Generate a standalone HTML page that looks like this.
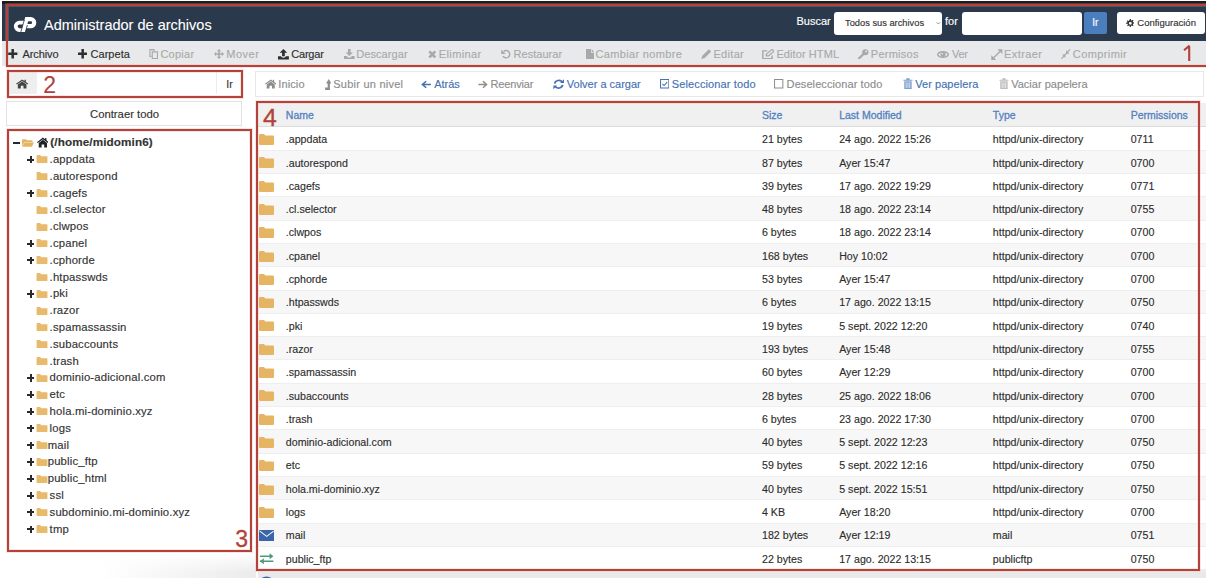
<!DOCTYPE html>
<html><head><meta charset="utf-8"><title>Administrador de archivos</title>
<style>
*{box-sizing:border-box;margin:0;padding:0}
html,body{width:1206px;height:582px;overflow:hidden;background:#fff;font-family:"Liberation Sans",sans-serif;position:relative}
.a{position:absolute}
.t{position:absolute;white-space:pre;-webkit-text-stroke-width:0.15px}
.tb{-webkit-text-stroke-width:0.12px}
</style></head><body>
<div class="a" style="left:2px;top:1px;width:1204px;height:3px;background:#1e1b1d"></div>
<div class="a" style="left:2px;top:4px;width:1204px;height:37px;background:#2a394b"></div>
<svg class="a" style="left:0;top:0" width="40" height="40" viewBox="0 0 40 40">
<path d="M24.2 22.65H19.45A3.72 3.72 0 0 0 19.45 30.1H22.6" fill="none" stroke="#fff" stroke-width="3.8"/>
<path d="M21 32.1L25.1 32.1L29.4 17.1L25.3 17.1Z" fill="#fff"/>
<path d="M26.5 19.2H30.7A3.5 3.5 0 0 1 30.7 26.2H26.4" fill="none" stroke="#fff" stroke-width="4.2"/>
<path d="M20.7 32.4L24.3 20M25.5 32.3L27.4 25" stroke="#2a394b" stroke-width="0.8"/>
</svg>
<div class="t " style="left:44px;top:14.80px;height:20px;line-height:20px;font-size:14.5px;color:#fff;font-weight:normal;-webkit-text-stroke-width:0.1px">Administrador de archivos</div>
<div class="t " style="left:796.5px;top:11.20px;height:20px;line-height:20px;font-size:11px;color:#fff;font-weight:normal;">Buscar</div>
<div class="a" style="left:834px;top:12px;width:108px;height:23px;background:#fff;border-radius:3px"></div>
<div class="t " style="left:845px;top:13.00px;height:20px;line-height:20px;font-size:9.3px;color:#333;font-weight:normal;">Todos sus archivos</div>
<svg class="a" style="left:930px;top:18px" width="12" height="10" viewBox="930 18 12 10"><path d="M936.6 22.3L938.3 24L940 22.3" fill="none" stroke="#888" stroke-width="0.9"/></svg>
<div class="t " style="left:945px;top:11.20px;height:20px;line-height:20px;font-size:11px;color:#fff;font-weight:normal;">for</div>
<div class="a" style="left:962px;top:12px;width:120px;height:23px;background:#fff;border-radius:3px"></div>
<div class="a" style="left:1084px;top:12px;width:23px;height:22px;background:#4a7ebf;border-radius:2px"></div>
<div class="t " style="left:1092.2px;top:13.00px;height:20px;line-height:20px;font-size:10px;color:#fff;font-weight:normal;">Ir</div>
<div class="a" style="left:1117px;top:12px;width:88px;height:22px;background:#fff;border-radius:3px"></div>
<svg class="a" style="left:1125.8px;top:18.5px" width="8.70" height="8.70" viewBox="0 0 12 12" preserveAspectRatio="none"><path fill="#333" d="M5.3 0h1.4l.3 1.7 1 .4 1.4-1 1 1-1 1.4.4 1 1.7.3v1.4l-1.7.3-.4 1 1 1.4-1 1-1.4-1-1 .4-.3 1.7H5.3l-.3-1.7-1-.4-1.4 1-1-1 1-1.4-.4-1L0 6.7V5.3l1.7-.3.4-1-1-1.4 1-1 1.4 1 1-.4zM6 4a2 2 0 100 4 2 2 0 000-4z"/></svg>
<div class="t " style="left:1137.3px;top:13.00px;height:20px;line-height:20px;font-size:9.5px;color:#333;font-weight:normal;">Configuración</div>
<div class="a" style="left:2px;top:41px;width:1204px;height:25px;background:#e8e9ea"></div>
<div class="t " style="left:22.4px;top:44.00px;height:20px;line-height:20px;font-size:11px;color:#2f2f2f;font-weight:normal;letter-spacing:-0.067px">Archivo</div>
<svg class="a" style="left:8.2px;top:49.3px" width="9.40" height="9.50" viewBox="0 0 12 12" preserveAspectRatio="none"><path d="M4.4 0H7.6V4.4H12V7.6H7.6V12H4.4V7.6H0V4.4H4.4Z" fill="#2f2f2f"/></svg>
<div class="t " style="left:90.6px;top:44.00px;height:20px;line-height:20px;font-size:11px;color:#2f2f2f;font-weight:normal;letter-spacing:0.017px">Carpeta</div>
<svg class="a" style="left:77.6px;top:49.3px" width="9.40" height="9.50" viewBox="0 0 12 12" preserveAspectRatio="none"><path d="M4.4 0H7.6V4.4H12V7.6H7.6V12H4.4V7.6H0V4.4H4.4Z" fill="#2f2f2f"/></svg>
<div class="t " style="left:160.4px;top:44.00px;height:20px;line-height:20px;font-size:11px;color:#a9a9a9;font-weight:normal;letter-spacing:0.26px">Copiar</div>
<svg class="a" style="left:149.3px;top:48.8px" width="9.40" height="10.40" viewBox="0 0 12 12" preserveAspectRatio="none"><path d="M3.2 8.6H1.2V0.8H6.6V2.6" fill="none" stroke="#a9a9a9" stroke-width="1.4"/><path d="M4.2 3.4H10.8V11.2H4.2Z" fill="none" stroke="#a9a9a9" stroke-width="1.4"/></svg>
<div class="t " style="left:226.2px;top:44.00px;height:20px;line-height:20px;font-size:11px;color:#a9a9a9;font-weight:normal;letter-spacing:0.525px">Mover</div>
<svg class="a" style="left:214px;top:49px" width="10.00" height="10.00" viewBox="0 0 12 12" preserveAspectRatio="none"><path d="M6 0L8.6 2.6H7V5H9.4V3.4L12 6L9.4 8.6V7H7V9.4H8.6L6 12L3.4 9.4H5V7H2.6V8.6L0 6L2.6 3.4V5H5V2.6H3.4Z" fill="#a9a9a9"/></svg>
<div class="t " style="left:291.2px;top:44.00px;height:20px;line-height:20px;font-size:11px;color:#2f2f2f;font-weight:normal;letter-spacing:-0.18px">Cargar</div>
<svg class="a" style="left:278px;top:49px" width="10.90" height="10.50" viewBox="0 0 12 12" preserveAspectRatio="none"><path d="M6 0L10.2 4.3H7.5V8.4H4.5V4.3H1.8Z" fill="#2f2f2f"/><path d="M0 8.2H3.6V9.2Q6 10.6 8.4 9.2V8.2H12V12H0Z" fill="#2f2f2f"/></svg>
<div class="t " style="left:356.2px;top:44.00px;height:20px;line-height:20px;font-size:11px;color:#a9a9a9;font-weight:normal;letter-spacing:0.087px">Descargar</div>
<svg class="a" style="left:344px;top:49px" width="10.60" height="10.30" viewBox="0 0 12 12" preserveAspectRatio="none"><path d="M4.5 0H7.5V4H10.2L6 8.3L1.8 4H4.5Z" fill="#a9a9a9"/><path d="M0 8.2H3.6V9.2Q6 10.6 8.4 9.2V8.2H12V12H0Z" fill="#a9a9a9"/></svg>
<div class="t " style="left:438.8px;top:44.00px;height:20px;line-height:20px;font-size:11px;color:#a9a9a9;font-weight:normal;letter-spacing:0.371px">Eliminar</div>
<svg class="a" style="left:428px;top:49.6px" width="8.60" height="8.80" viewBox="0 0 12 12" preserveAspectRatio="none"><path d="M1.8 1.8L10.2 10.2M10.2 1.8L1.8 10.2" stroke="#a9a9a9" stroke-width="3.6"/></svg>
<div class="t " style="left:513.6px;top:44.00px;height:20px;line-height:20px;font-size:11px;color:#a9a9a9;font-weight:normal;letter-spacing:0.025px">Restaurar</div>
<svg class="a" style="left:500.8px;top:49px" width="10.00" height="10.00" viewBox="0 0 12 12" preserveAspectRatio="none"><path d="M3.2 2.9A4.4 4.4 0 1 1 2.3 8.6" fill="none" stroke="#a9a9a9" stroke-width="1.7"/><path d="M0.3 0.6V6H5.6Z" fill="#a9a9a9"/></svg>
<div class="t " style="left:595.6px;top:44.00px;height:20px;line-height:20px;font-size:11px;color:#a9a9a9;font-weight:normal;letter-spacing:0.331px">Cambiar nombre</div>
<svg class="a" style="left:585.6px;top:49px" width="8.00" height="10.20" viewBox="0 0 12 12" preserveAspectRatio="none"><path d="M0 0H7.5V4.5H12V12H0Z" fill="#a9a9a9"/><path d="M8.6 0L12 3.4H8.6Z" fill="#a9a9a9"/></svg>
<div class="t " style="left:713.4px;top:44.00px;height:20px;line-height:20px;font-size:11px;color:#a9a9a9;font-weight:normal;letter-spacing:0.32px">Editar</div>
<svg class="a" style="left:700.5px;top:49px" width="10.50" height="10.30" viewBox="0 0 12 12" preserveAspectRatio="none"><path d="M9 0.3L11.7 3L4.2 10.5L0.3 11.7L1.5 7.8Z" fill="#a9a9a9"/></svg>
<div class="t " style="left:776.4px;top:44.00px;height:20px;line-height:20px;font-size:11px;color:#a9a9a9;font-weight:normal;letter-spacing:0.09px">Editor HTML</div>
<svg class="a" style="left:762px;top:49px" width="12.40" height="10.40" viewBox="0 0 12 12" preserveAspectRatio="none"><path d="M9.8 7.6V11.2H0.8V2.2H5" fill="none" stroke="#a9a9a9" stroke-width="1.4"/><path d="M9.8 0.4L11.8 2.4L6.2 8H4.2V6Z" fill="none" stroke="#a9a9a9" stroke-width="1.3"/></svg>
<div class="t " style="left:870.8px;top:44.00px;height:20px;line-height:20px;font-size:11px;color:#a9a9a9;font-weight:normal;letter-spacing:0.257px">Permisos</div>
<svg class="a" style="left:858px;top:49px" width="10.70" height="10.30" viewBox="0 0 12 12" preserveAspectRatio="none"><circle cx="8.3" cy="3.7" r="3.5" fill="#a9a9a9"/><circle cx="9.2" cy="2.8" r="1" fill="#e9e9e9"/><path d="M6.2 5.8L1 11" stroke="#a9a9a9" stroke-width="2.6" stroke-linecap="round"/></svg>
<div class="t " style="left:952.0px;top:44.00px;height:20px;line-height:20px;font-size:11px;color:#a9a9a9;font-weight:normal;letter-spacing:-0.3px">Ver</div>
<svg class="a" style="left:937px;top:48.5px" width="12.00" height="11.00" viewBox="0 0 12 12" preserveAspectRatio="none"><path d="M0.6 6C2 2 10 2 11.4 6C10 10 2 10 0.6 6Z" fill="none" stroke="#a9a9a9" stroke-width="1.5"/><circle cx="6" cy="6" r="2.6" fill="#a9a9a9"/><circle cx="5.2" cy="5.2" r="0.9" fill="#e9e9e9"/></svg>
<div class="t " style="left:1004.0px;top:44.00px;height:20px;line-height:20px;font-size:11px;color:#a9a9a9;font-weight:normal;letter-spacing:0.417px">Extraer</div>
<svg class="a" style="left:991.3px;top:48.5px" width="11.70" height="11.30" viewBox="0 0 12 12" preserveAspectRatio="none"><path d="M6.6 0.3H11.7V5.4Z M5.4 11.7H0.3V6.6Z" fill="#a9a9a9"/><path d="M9.8 2.2L2.2 9.8" stroke="#a9a9a9" stroke-width="1.4"/></svg>
<div class="t " style="left:1072.8px;top:44.00px;height:20px;line-height:20px;font-size:11px;color:#a9a9a9;font-weight:normal;letter-spacing:0.4px">Comprimir</div>
<svg class="a" style="left:1061px;top:48.8px" width="9.50" height="10.20" viewBox="0 0 12 12" preserveAspectRatio="none"><path d="M6.5 1.3V5.5H10.7Z M5.5 10.7V6.5H1.3Z" fill="#a9a9a9"/><path d="M11.5 0.5L0.5 11.5" stroke="#a9a9a9" stroke-width="1.4"/></svg>
<div class="a" style="left:9px;top:72px;width:28px;height:22px;background:#eeeeee"></div>
<svg class="a" style="left:15.6px;top:79.4px" width="12.30" height="9.80" viewBox="0 0 12 12" preserveAspectRatio="none"><path d="M6 0.6L0 5.8L0.9 6.8L6 2.4L11.1 6.8L12 5.8L9.6 3.7V1H8.3V2.6Z" fill="#444"/><path d="M1.8 6.6L6 3L10.2 6.6V11.6H7.3V8.3H4.7V11.6H1.8Z" fill="#444"/></svg>
<div class="a" style="left:216px;top:72px;width:1px;height:22px;background:#ededed"></div>
<div class="t " style="left:226.3px;top:74.30px;height:20px;line-height:20px;font-size:10.5px;color:#333;font-weight:normal;">Ir</div>
<div class="a" style="left:6px;top:101px;width:236px;height:25px;border:1px solid #e2e2e2;background:#fff"></div>
<div class="t " style="left:90px;top:103.80px;height:20px;line-height:20px;font-size:11.3px;color:#333;font-weight:normal;">Contraer todo</div>
<div class="a" style="left:13.4px;top:141.8px;width:7px;height:2px;background:#2a2a2a"></div>
<div class="t " style="left:50.3px;top:132.30px;height:20px;line-height:20px;font-size:11.7px;color:#333;font-weight:bold;letter-spacing:0.12px">(/home/midomin6)</div>
<svg class="a" style="left:22.3px;top:138.7px" width="12.00" height="8.00" viewBox="0 0 13.6 10.2" preserveAspectRatio="none"><path d="M0 1.2Q0 0.2 1 0.2H4.5L5.6 1.5H11Q12 1.5 12 2.5V4H2.6L0 9.5Z" fill="#e6b563"/><path d="M2.8 4.6H13.6L11.2 10H0.4Z" fill="#e6b563"/></svg>
<svg class="a" style="left:36.7px;top:137.2px" width="11.80" height="10.80" viewBox="0 0 12 12" preserveAspectRatio="none"><path d="M6 0.6L0 5.8L0.9 6.8L6 2.4L11.1 6.8L12 5.8L9.6 3.7V1H8.3V2.6Z" fill="#222"/><path d="M1.8 6.6L6 3L10.2 6.6V11.6H7.3V8.3H4.7V11.6H1.8Z" fill="#222"/></svg>
<div class="a" style="left:26.8px;top:158.6px;width:7.4px;height:2px;background:#2a2a2a"></div>
<div class="a" style="left:29.5px;top:155.9px;width:2px;height:7.4px;background:#2a2a2a"></div>
<svg class="a" style="left:36px;top:155.4px" width="12" height="8" viewBox="0 0 15 11"><path d="M0 1.2Q0 0 1.2 0H5L6.3 1.6H13.8Q15 1.6 15 2.8V9.8Q15 11 13.8 11H1.2Q0 11 0 9.8Z" fill="#e8bb6c"/></svg>
<div class="t " style="left:49.6px;top:148.90px;height:20px;line-height:20px;font-size:11.3px;color:#333;font-weight:normal;letter-spacing:0.17px">.appdata</div>
<svg class="a" style="left:36px;top:172.2px" width="12" height="8" viewBox="0 0 15 11"><path d="M0 1.2Q0 0 1.2 0H5L6.3 1.6H13.8Q15 1.6 15 2.8V9.8Q15 11 13.8 11H1.2Q0 11 0 9.8Z" fill="#e8bb6c"/></svg>
<div class="t " style="left:49.6px;top:165.70px;height:20px;line-height:20px;font-size:11.3px;color:#333;font-weight:normal;letter-spacing:0.17px">.autorespond</div>
<div class="a" style="left:26.8px;top:192.2px;width:7.4px;height:2px;background:#2a2a2a"></div>
<div class="a" style="left:29.5px;top:189.5px;width:2px;height:7.4px;background:#2a2a2a"></div>
<svg class="a" style="left:36px;top:189.0px" width="12" height="8" viewBox="0 0 15 11"><path d="M0 1.2Q0 0 1.2 0H5L6.3 1.6H13.8Q15 1.6 15 2.8V9.8Q15 11 13.8 11H1.2Q0 11 0 9.8Z" fill="#e8bb6c"/></svg>
<div class="t " style="left:49.6px;top:182.50px;height:20px;line-height:20px;font-size:11.3px;color:#333;font-weight:normal;letter-spacing:0.17px">.cagefs</div>
<svg class="a" style="left:36px;top:205.8px" width="12" height="8" viewBox="0 0 15 11"><path d="M0 1.2Q0 0 1.2 0H5L6.3 1.6H13.8Q15 1.6 15 2.8V9.8Q15 11 13.8 11H1.2Q0 11 0 9.8Z" fill="#e8bb6c"/></svg>
<div class="t " style="left:49.6px;top:199.30px;height:20px;line-height:20px;font-size:11.3px;color:#333;font-weight:normal;letter-spacing:0.17px">.cl.selector</div>
<svg class="a" style="left:36px;top:222.6px" width="12" height="8" viewBox="0 0 15 11"><path d="M0 1.2Q0 0 1.2 0H5L6.3 1.6H13.8Q15 1.6 15 2.8V9.8Q15 11 13.8 11H1.2Q0 11 0 9.8Z" fill="#e8bb6c"/></svg>
<div class="t " style="left:49.6px;top:216.10px;height:20px;line-height:20px;font-size:11.3px;color:#333;font-weight:normal;letter-spacing:0.17px">.clwpos</div>
<div class="a" style="left:26.8px;top:242.6px;width:7.4px;height:2px;background:#2a2a2a"></div>
<div class="a" style="left:29.5px;top:239.9px;width:2px;height:7.4px;background:#2a2a2a"></div>
<svg class="a" style="left:36px;top:239.4px" width="12" height="8" viewBox="0 0 15 11"><path d="M0 1.2Q0 0 1.2 0H5L6.3 1.6H13.8Q15 1.6 15 2.8V9.8Q15 11 13.8 11H1.2Q0 11 0 9.8Z" fill="#e8bb6c"/></svg>
<div class="t " style="left:49.6px;top:232.90px;height:20px;line-height:20px;font-size:11.3px;color:#333;font-weight:normal;letter-spacing:0.17px">.cpanel</div>
<div class="a" style="left:26.8px;top:259.4px;width:7.4px;height:2px;background:#2a2a2a"></div>
<div class="a" style="left:29.5px;top:256.7px;width:2px;height:7.4px;background:#2a2a2a"></div>
<svg class="a" style="left:36px;top:256.2px" width="12" height="8" viewBox="0 0 15 11"><path d="M0 1.2Q0 0 1.2 0H5L6.3 1.6H13.8Q15 1.6 15 2.8V9.8Q15 11 13.8 11H1.2Q0 11 0 9.8Z" fill="#e8bb6c"/></svg>
<div class="t " style="left:49.6px;top:249.70px;height:20px;line-height:20px;font-size:11.3px;color:#333;font-weight:normal;letter-spacing:0.17px">.cphorde</div>
<svg class="a" style="left:36px;top:273.0px" width="12" height="8" viewBox="0 0 15 11"><path d="M0 1.2Q0 0 1.2 0H5L6.3 1.6H13.8Q15 1.6 15 2.8V9.8Q15 11 13.8 11H1.2Q0 11 0 9.8Z" fill="#e8bb6c"/></svg>
<div class="t " style="left:49.6px;top:266.50px;height:20px;line-height:20px;font-size:11.3px;color:#333;font-weight:normal;letter-spacing:0.17px">.htpasswds</div>
<div class="a" style="left:26.8px;top:293.0px;width:7.4px;height:2px;background:#2a2a2a"></div>
<div class="a" style="left:29.5px;top:290.3px;width:2px;height:7.4px;background:#2a2a2a"></div>
<svg class="a" style="left:36px;top:289.8px" width="12" height="8" viewBox="0 0 15 11"><path d="M0 1.2Q0 0 1.2 0H5L6.3 1.6H13.8Q15 1.6 15 2.8V9.8Q15 11 13.8 11H1.2Q0 11 0 9.8Z" fill="#e8bb6c"/></svg>
<div class="t " style="left:49.6px;top:283.30px;height:20px;line-height:20px;font-size:11.3px;color:#333;font-weight:normal;letter-spacing:0.17px">.pki</div>
<svg class="a" style="left:36px;top:306.6px" width="12" height="8" viewBox="0 0 15 11"><path d="M0 1.2Q0 0 1.2 0H5L6.3 1.6H13.8Q15 1.6 15 2.8V9.8Q15 11 13.8 11H1.2Q0 11 0 9.8Z" fill="#e8bb6c"/></svg>
<div class="t " style="left:49.6px;top:300.10px;height:20px;line-height:20px;font-size:11.3px;color:#333;font-weight:normal;letter-spacing:0.17px">.razor</div>
<svg class="a" style="left:36px;top:323.4px" width="12" height="8" viewBox="0 0 15 11"><path d="M0 1.2Q0 0 1.2 0H5L6.3 1.6H13.8Q15 1.6 15 2.8V9.8Q15 11 13.8 11H1.2Q0 11 0 9.8Z" fill="#e8bb6c"/></svg>
<div class="t " style="left:49.6px;top:316.90px;height:20px;line-height:20px;font-size:11.3px;color:#333;font-weight:normal;letter-spacing:0.17px">.spamassassin</div>
<svg class="a" style="left:36px;top:340.2px" width="12" height="8" viewBox="0 0 15 11"><path d="M0 1.2Q0 0 1.2 0H5L6.3 1.6H13.8Q15 1.6 15 2.8V9.8Q15 11 13.8 11H1.2Q0 11 0 9.8Z" fill="#e8bb6c"/></svg>
<div class="t " style="left:49.6px;top:333.70px;height:20px;line-height:20px;font-size:11.3px;color:#333;font-weight:normal;letter-spacing:0.17px">.subaccounts</div>
<svg class="a" style="left:36px;top:357.0px" width="12" height="8" viewBox="0 0 15 11"><path d="M0 1.2Q0 0 1.2 0H5L6.3 1.6H13.8Q15 1.6 15 2.8V9.8Q15 11 13.8 11H1.2Q0 11 0 9.8Z" fill="#e8bb6c"/></svg>
<div class="t " style="left:49.6px;top:350.50px;height:20px;line-height:20px;font-size:11.3px;color:#333;font-weight:normal;letter-spacing:0.17px">.trash</div>
<div class="a" style="left:26.8px;top:377.0px;width:7.4px;height:2px;background:#2a2a2a"></div>
<div class="a" style="left:29.5px;top:374.3px;width:2px;height:7.4px;background:#2a2a2a"></div>
<svg class="a" style="left:36px;top:373.8px" width="12" height="8" viewBox="0 0 15 11"><path d="M0 1.2Q0 0 1.2 0H5L6.3 1.6H13.8Q15 1.6 15 2.8V9.8Q15 11 13.8 11H1.2Q0 11 0 9.8Z" fill="#e8bb6c"/></svg>
<div class="t " style="left:49.6px;top:367.30px;height:20px;line-height:20px;font-size:11.3px;color:#333;font-weight:normal;letter-spacing:0.17px">dominio-adicional.com</div>
<div class="a" style="left:26.8px;top:393.8px;width:7.4px;height:2px;background:#2a2a2a"></div>
<div class="a" style="left:29.5px;top:391.1px;width:2px;height:7.4px;background:#2a2a2a"></div>
<svg class="a" style="left:36px;top:390.6px" width="12" height="8" viewBox="0 0 15 11"><path d="M0 1.2Q0 0 1.2 0H5L6.3 1.6H13.8Q15 1.6 15 2.8V9.8Q15 11 13.8 11H1.2Q0 11 0 9.8Z" fill="#e8bb6c"/></svg>
<div class="t " style="left:49.6px;top:384.10px;height:20px;line-height:20px;font-size:11.3px;color:#333;font-weight:normal;letter-spacing:0.17px">etc</div>
<div class="a" style="left:26.8px;top:410.6px;width:7.4px;height:2px;background:#2a2a2a"></div>
<div class="a" style="left:29.5px;top:407.9px;width:2px;height:7.4px;background:#2a2a2a"></div>
<svg class="a" style="left:36px;top:407.4px" width="12" height="8" viewBox="0 0 15 11"><path d="M0 1.2Q0 0 1.2 0H5L6.3 1.6H13.8Q15 1.6 15 2.8V9.8Q15 11 13.8 11H1.2Q0 11 0 9.8Z" fill="#e8bb6c"/></svg>
<div class="t " style="left:49.6px;top:400.90px;height:20px;line-height:20px;font-size:11.3px;color:#333;font-weight:normal;letter-spacing:0.17px">hola.mi-dominio.xyz</div>
<div class="a" style="left:26.8px;top:427.4px;width:7.4px;height:2px;background:#2a2a2a"></div>
<div class="a" style="left:29.5px;top:424.7px;width:2px;height:7.4px;background:#2a2a2a"></div>
<svg class="a" style="left:36px;top:424.2px" width="12" height="8" viewBox="0 0 15 11"><path d="M0 1.2Q0 0 1.2 0H5L6.3 1.6H13.8Q15 1.6 15 2.8V9.8Q15 11 13.8 11H1.2Q0 11 0 9.8Z" fill="#e8bb6c"/></svg>
<div class="t " style="left:49.6px;top:417.70px;height:20px;line-height:20px;font-size:11.3px;color:#333;font-weight:normal;letter-spacing:0.17px">logs</div>
<div class="a" style="left:26.8px;top:444.2px;width:7.4px;height:2px;background:#2a2a2a"></div>
<div class="a" style="left:29.5px;top:441.5px;width:2px;height:7.4px;background:#2a2a2a"></div>
<svg class="a" style="left:36px;top:441.0px" width="12" height="8" viewBox="0 0 15 11"><path d="M0 1.2Q0 0 1.2 0H5L6.3 1.6H13.8Q15 1.6 15 2.8V9.8Q15 11 13.8 11H1.2Q0 11 0 9.8Z" fill="#e8bb6c"/></svg>
<div class="t " style="left:47.7px;top:434.50px;height:20px;line-height:20px;font-size:11.3px;color:#333;font-weight:normal;letter-spacing:0.17px">mail</div>
<div class="a" style="left:26.8px;top:461.0px;width:7.4px;height:2px;background:#2a2a2a"></div>
<div class="a" style="left:29.5px;top:458.3px;width:2px;height:7.4px;background:#2a2a2a"></div>
<svg class="a" style="left:36px;top:457.8px" width="12" height="8" viewBox="0 0 15 11"><path d="M0 1.2Q0 0 1.2 0H5L6.3 1.6H13.8Q15 1.6 15 2.8V9.8Q15 11 13.8 11H1.2Q0 11 0 9.8Z" fill="#e8bb6c"/></svg>
<div class="t " style="left:47.7px;top:451.30px;height:20px;line-height:20px;font-size:11.3px;color:#333;font-weight:normal;letter-spacing:0.17px">public_ftp</div>
<div class="a" style="left:26.8px;top:477.8px;width:7.4px;height:2px;background:#2a2a2a"></div>
<div class="a" style="left:29.5px;top:475.1px;width:2px;height:7.4px;background:#2a2a2a"></div>
<svg class="a" style="left:36px;top:474.6px" width="12" height="8" viewBox="0 0 15 11"><path d="M0 1.2Q0 0 1.2 0H5L6.3 1.6H13.8Q15 1.6 15 2.8V9.8Q15 11 13.8 11H1.2Q0 11 0 9.8Z" fill="#e8bb6c"/></svg>
<div class="t " style="left:47.7px;top:468.10px;height:20px;line-height:20px;font-size:11.3px;color:#333;font-weight:normal;letter-spacing:0.17px">public_html</div>
<div class="a" style="left:26.8px;top:494.6px;width:7.4px;height:2px;background:#2a2a2a"></div>
<div class="a" style="left:29.5px;top:491.9px;width:2px;height:7.4px;background:#2a2a2a"></div>
<svg class="a" style="left:36px;top:491.4px" width="12" height="8" viewBox="0 0 15 11"><path d="M0 1.2Q0 0 1.2 0H5L6.3 1.6H13.8Q15 1.6 15 2.8V9.8Q15 11 13.8 11H1.2Q0 11 0 9.8Z" fill="#e8bb6c"/></svg>
<div class="t " style="left:49.6px;top:484.90px;height:20px;line-height:20px;font-size:11.3px;color:#333;font-weight:normal;letter-spacing:0.17px">ssl</div>
<div class="a" style="left:26.8px;top:511.4px;width:7.4px;height:2px;background:#2a2a2a"></div>
<div class="a" style="left:29.5px;top:508.7px;width:2px;height:7.4px;background:#2a2a2a"></div>
<svg class="a" style="left:36px;top:508.2px" width="12" height="8" viewBox="0 0 15 11"><path d="M0 1.2Q0 0 1.2 0H5L6.3 1.6H13.8Q15 1.6 15 2.8V9.8Q15 11 13.8 11H1.2Q0 11 0 9.8Z" fill="#e8bb6c"/></svg>
<div class="t " style="left:49.6px;top:501.70px;height:20px;line-height:20px;font-size:11.3px;color:#333;font-weight:normal;letter-spacing:0.17px">subdominio.mi-dominio.xyz</div>
<div class="a" style="left:26.8px;top:528.2px;width:7.4px;height:2px;background:#2a2a2a"></div>
<div class="a" style="left:29.5px;top:525.5px;width:2px;height:7.4px;background:#2a2a2a"></div>
<svg class="a" style="left:36px;top:525.0px" width="12" height="8" viewBox="0 0 15 11"><path d="M0 1.2Q0 0 1.2 0H5L6.3 1.6H13.8Q15 1.6 15 2.8V9.8Q15 11 13.8 11H1.2Q0 11 0 9.8Z" fill="#e8bb6c"/></svg>
<div class="t " style="left:49.6px;top:518.50px;height:20px;line-height:20px;font-size:11.3px;color:#333;font-weight:normal;letter-spacing:0.17px">tmp</div>
<div class="a" style="left:255px;top:71px;width:949px;height:26px;border:1px solid #e8e8e8;background:#fff"></div>
<div class="t " style="left:278.2px;top:74.30px;height:20px;line-height:20px;font-size:11px;color:#8d8d8d;font-weight:normal;letter-spacing:0.14px">Inicio</div>
<svg class="a" style="left:264.5px;top:79px" width="11.50" height="9.80" viewBox="0 0 12 12" preserveAspectRatio="none"><path d="M6 0.6L0 5.8L0.9 6.8L6 2.4L11.1 6.8L12 5.8L9.6 3.7V1H8.3V2.6Z" fill="#8d8d8d"/><path d="M1.8 6.6L6 3L10.2 6.6V11.6H7.3V8.3H4.7V11.6H1.8Z" fill="#8d8d8d"/></svg>
<div class="t " style="left:333.2px;top:74.30px;height:20px;line-height:20px;font-size:11px;color:#8d8d8d;font-weight:normal;letter-spacing:0.246px">Subir un nivel</div>
<svg class="a" style="left:324.7px;top:78.5px" width="6.50" height="11.00" viewBox="0 0 12 12" preserveAspectRatio="none"><path d="M6.9 0L11.9 4.8H9V12H0.3V9.4H5V4.8H1.9Z" fill="#8d8d8d"/></svg>
<div class="t " style="left:434.2px;top:74.30px;height:20px;line-height:20px;font-size:11px;color:#4472b2;font-weight:normal;letter-spacing:-0.025px">Atrás</div>
<svg class="a" style="left:421.2px;top:79.5px" width="10.40" height="9.00" viewBox="0 0 12 12" preserveAspectRatio="none"><path d="M11.5 6H1.8M6 1.6L1.5 6L6 10.4" fill="none" stroke="#4472b2" stroke-width="1.8"/></svg>
<div class="t " style="left:490.6px;top:74.30px;height:20px;line-height:20px;font-size:11px;color:#8d8d8d;font-weight:normal;letter-spacing:-0.171px">Reenviar</div>
<svg class="a" style="left:478.4px;top:79.5px" width="9.90" height="9.00" viewBox="0 0 12 12" preserveAspectRatio="none"><path d="M0.5 6H10.2M6 1.6L10.5 6L6 10.4" fill="none" stroke="#8d8d8d" stroke-width="1.8"/></svg>
<div class="t " style="left:566.8px;top:74.30px;height:20px;line-height:20px;font-size:11px;color:#4472b2;font-weight:normal;letter-spacing:-0.007px">Volver a cargar</div>
<svg class="a" style="left:553px;top:79px" width="11.40" height="10.50" viewBox="0 0 12 12" preserveAspectRatio="none"><path d="M1.8 5.2A4.4 4.4 0 0 1 9.8 3.6M10.2 6.8A4.4 4.4 0 0 1 2.2 8.4" fill="none" stroke="#4472b2" stroke-width="1.9"/><path d="M7.4 4.6H11.6V0.4Z M4.6 7.4H0.4V11.6Z" fill="#4472b2"/></svg>
<div class="t " style="left:671.8px;top:74.30px;height:20px;line-height:20px;font-size:11px;color:#4472b2;font-weight:normal;letter-spacing:0.12px">Seleccionar todo</div>
<svg class="a" style="left:660px;top:79.2px" width="9.40" height="9.60" viewBox="0 0 12 12" preserveAspectRatio="none"><path d="M0.7 0.7H11.3V11.3H0.7Z" fill="none" stroke="#4472b2" stroke-width="1.3"/><path d="M3 6L5.2 8.2L9.2 3.8" fill="none" stroke="#4472b2" stroke-width="1.3"/></svg>
<div class="t " style="left:786.6px;top:74.30px;height:20px;line-height:20px;font-size:11px;color:#8d8d8d;font-weight:normal;letter-spacing:0.088px">Deseleccionar todo</div>
<svg class="a" style="left:774.4px;top:79.2px" width="9.40" height="9.60" viewBox="0 0 12 12" preserveAspectRatio="none"><path d="M0.7 0.7H11.3V11.3H0.7Z" fill="none" stroke="#8d8d8d" stroke-width="1.3"/></svg>
<div class="t " style="left:915.2px;top:74.30px;height:20px;line-height:20px;font-size:11px;color:#4472b2;font-weight:normal;letter-spacing:0.064px">Ver papelera</div>
<svg class="a" style="left:902.7px;top:77.8px" width="9.90" height="11.00" viewBox="0 0 12 12" preserveAspectRatio="none"><path d="M0.5 1.8H11.5V3H0.5Z M4 0.3H8V1.9H4Z" fill="#7f9fcf"/><path d="M1.5 3.6H10.5V12H1.5Z" fill="#7f9fcf"/><path d="M3.8 4.8V10.8M6 4.8V10.8M8.2 4.8V10.8" stroke="#fff" stroke-width="0.8"/></svg>
<div class="t " style="left:1011.2px;top:74.30px;height:20px;line-height:20px;font-size:11px;color:#8d8d8d;font-weight:normal;letter-spacing:0.007px">Vaciar papelera</div>
<svg class="a" style="left:998.7px;top:77.8px" width="9.90" height="11.00" viewBox="0 0 12 12" preserveAspectRatio="none"><path d="M0.5 1.8H11.5V3H0.5Z M4 0.3H8V1.9H4Z" fill="#bdbdbd"/><path d="M1.5 3.6H10.5V12H1.5Z" fill="#bdbdbd"/><path d="M3.8 4.8V10.8M6 4.8V10.8M8.2 4.8V10.8" stroke="#fff" stroke-width="0.8"/></svg>
<div class="a" style="left:258px;top:103px;width:948px;height:24px;background:#f0f0f0;border-bottom:1px solid #dcdcdc"></div>
<div class="t " style="left:285.8px;top:104.60px;height:20px;line-height:20px;font-size:10.5px;color:#5282c0;font-weight:normal;-webkit-text-stroke-width:0.3px">Name</div>
<div class="t " style="left:762px;top:104.60px;height:20px;line-height:20px;font-size:10.5px;color:#5282c0;font-weight:normal;-webkit-text-stroke-width:0.3px">Size</div>
<div class="t " style="left:839.2px;top:104.60px;height:20px;line-height:20px;font-size:10.5px;color:#5282c0;font-weight:normal;-webkit-text-stroke-width:0.3px">Last Modified</div>
<div class="t " style="left:992.8px;top:104.60px;height:20px;line-height:20px;font-size:10.5px;color:#5282c0;font-weight:normal;-webkit-text-stroke-width:0.3px">Type</div>
<div class="t " style="left:1130.7px;top:104.60px;height:20px;line-height:20px;font-size:10.5px;color:#5282c0;font-weight:normal;-webkit-text-stroke-width:0.3px">Permissions</div>
<div class="a" style="left:258px;top:127.5px;width:948px;height:23.3px;background:#fff;border-bottom:1px solid #eeeeee"></div>
<svg class="a" style="left:259px;top:134.0px" width="15" height="11" viewBox="0 0 15 11"><path d="M0 1.2Q0 0 1.2 0H5L6.3 1.6H13.8Q15 1.6 15 2.8V9.8Q15 11 13.8 11H1.2Q0 11 0 9.8Z" fill="#e6b563"/></svg>
<div class="t tb" style="left:285.8px;top:129.20px;height:20px;line-height:20px;font-size:10.65px;color:#2b2b2b;font-weight:normal;">.appdata</div>
<div class="t tb" style="left:762px;top:129.20px;height:20px;line-height:20px;font-size:10.65px;color:#2b2b2b;font-weight:normal;">21 bytes</div>
<div class="t tb" style="left:839.2px;top:129.20px;height:20px;line-height:20px;font-size:10.65px;color:#2b2b2b;font-weight:normal;">24 ago. 2022 15:26</div>
<div class="t tb" style="left:992.8px;top:129.20px;height:20px;line-height:20px;font-size:10.65px;color:#2b2b2b;font-weight:normal;">httpd/unix-directory</div>
<div class="t tb" style="left:1130.7px;top:129.20px;height:20px;line-height:20px;font-size:10.65px;color:#2b2b2b;font-weight:normal;">0711</div>
<div class="a" style="left:258px;top:150.8px;width:948px;height:23.3px;background:#f7f7f7;border-bottom:1px solid #eeeeee"></div>
<svg class="a" style="left:259px;top:157.3px" width="15" height="11" viewBox="0 0 15 11"><path d="M0 1.2Q0 0 1.2 0H5L6.3 1.6H13.8Q15 1.6 15 2.8V9.8Q15 11 13.8 11H1.2Q0 11 0 9.8Z" fill="#e6b563"/></svg>
<div class="t tb" style="left:285.8px;top:152.50px;height:20px;line-height:20px;font-size:10.65px;color:#2b2b2b;font-weight:normal;">.autorespond</div>
<div class="t tb" style="left:762px;top:152.50px;height:20px;line-height:20px;font-size:10.65px;color:#2b2b2b;font-weight:normal;">87 bytes</div>
<div class="t tb" style="left:839.2px;top:152.50px;height:20px;line-height:20px;font-size:10.65px;color:#2b2b2b;font-weight:normal;">Ayer 15:47</div>
<div class="t tb" style="left:992.8px;top:152.50px;height:20px;line-height:20px;font-size:10.65px;color:#2b2b2b;font-weight:normal;">httpd/unix-directory</div>
<div class="t tb" style="left:1130.7px;top:152.50px;height:20px;line-height:20px;font-size:10.65px;color:#2b2b2b;font-weight:normal;">0700</div>
<div class="a" style="left:258px;top:174.1px;width:948px;height:23.3px;background:#fff;border-bottom:1px solid #eeeeee"></div>
<svg class="a" style="left:259px;top:180.6px" width="15" height="11" viewBox="0 0 15 11"><path d="M0 1.2Q0 0 1.2 0H5L6.3 1.6H13.8Q15 1.6 15 2.8V9.8Q15 11 13.8 11H1.2Q0 11 0 9.8Z" fill="#e6b563"/></svg>
<div class="t tb" style="left:285.8px;top:175.80px;height:20px;line-height:20px;font-size:10.65px;color:#2b2b2b;font-weight:normal;">.cagefs</div>
<div class="t tb" style="left:762px;top:175.80px;height:20px;line-height:20px;font-size:10.65px;color:#2b2b2b;font-weight:normal;">39 bytes</div>
<div class="t tb" style="left:839.2px;top:175.80px;height:20px;line-height:20px;font-size:10.65px;color:#2b2b2b;font-weight:normal;">17 ago. 2022 19:29</div>
<div class="t tb" style="left:992.8px;top:175.80px;height:20px;line-height:20px;font-size:10.65px;color:#2b2b2b;font-weight:normal;">httpd/unix-directory</div>
<div class="t tb" style="left:1130.7px;top:175.80px;height:20px;line-height:20px;font-size:10.65px;color:#2b2b2b;font-weight:normal;">0771</div>
<div class="a" style="left:258px;top:197.4px;width:948px;height:23.3px;background:#f7f7f7;border-bottom:1px solid #eeeeee"></div>
<svg class="a" style="left:259px;top:203.9px" width="15" height="11" viewBox="0 0 15 11"><path d="M0 1.2Q0 0 1.2 0H5L6.3 1.6H13.8Q15 1.6 15 2.8V9.8Q15 11 13.8 11H1.2Q0 11 0 9.8Z" fill="#e6b563"/></svg>
<div class="t tb" style="left:285.8px;top:199.10px;height:20px;line-height:20px;font-size:10.65px;color:#2b2b2b;font-weight:normal;">.cl.selector</div>
<div class="t tb" style="left:762px;top:199.10px;height:20px;line-height:20px;font-size:10.65px;color:#2b2b2b;font-weight:normal;">48 bytes</div>
<div class="t tb" style="left:839.2px;top:199.10px;height:20px;line-height:20px;font-size:10.65px;color:#2b2b2b;font-weight:normal;">18 ago. 2022 23:14</div>
<div class="t tb" style="left:992.8px;top:199.10px;height:20px;line-height:20px;font-size:10.65px;color:#2b2b2b;font-weight:normal;">httpd/unix-directory</div>
<div class="t tb" style="left:1130.7px;top:199.10px;height:20px;line-height:20px;font-size:10.65px;color:#2b2b2b;font-weight:normal;">0755</div>
<div class="a" style="left:258px;top:220.7px;width:948px;height:23.3px;background:#fff;border-bottom:1px solid #eeeeee"></div>
<svg class="a" style="left:259px;top:227.2px" width="15" height="11" viewBox="0 0 15 11"><path d="M0 1.2Q0 0 1.2 0H5L6.3 1.6H13.8Q15 1.6 15 2.8V9.8Q15 11 13.8 11H1.2Q0 11 0 9.8Z" fill="#e6b563"/></svg>
<div class="t tb" style="left:285.8px;top:222.40px;height:20px;line-height:20px;font-size:10.65px;color:#2b2b2b;font-weight:normal;">.clwpos</div>
<div class="t tb" style="left:762px;top:222.40px;height:20px;line-height:20px;font-size:10.65px;color:#2b2b2b;font-weight:normal;">6 bytes</div>
<div class="t tb" style="left:839.2px;top:222.40px;height:20px;line-height:20px;font-size:10.65px;color:#2b2b2b;font-weight:normal;">18 ago. 2022 23:14</div>
<div class="t tb" style="left:992.8px;top:222.40px;height:20px;line-height:20px;font-size:10.65px;color:#2b2b2b;font-weight:normal;">httpd/unix-directory</div>
<div class="t tb" style="left:1130.7px;top:222.40px;height:20px;line-height:20px;font-size:10.65px;color:#2b2b2b;font-weight:normal;">0700</div>
<div class="a" style="left:258px;top:244.0px;width:948px;height:23.3px;background:#f7f7f7;border-bottom:1px solid #eeeeee"></div>
<svg class="a" style="left:259px;top:250.5px" width="15" height="11" viewBox="0 0 15 11"><path d="M0 1.2Q0 0 1.2 0H5L6.3 1.6H13.8Q15 1.6 15 2.8V9.8Q15 11 13.8 11H1.2Q0 11 0 9.8Z" fill="#e6b563"/></svg>
<div class="t tb" style="left:285.8px;top:245.70px;height:20px;line-height:20px;font-size:10.65px;color:#2b2b2b;font-weight:normal;">.cpanel</div>
<div class="t tb" style="left:762px;top:245.70px;height:20px;line-height:20px;font-size:10.65px;color:#2b2b2b;font-weight:normal;">168 bytes</div>
<div class="t tb" style="left:839.2px;top:245.70px;height:20px;line-height:20px;font-size:10.65px;color:#2b2b2b;font-weight:normal;">Hoy 10:02</div>
<div class="t tb" style="left:992.8px;top:245.70px;height:20px;line-height:20px;font-size:10.65px;color:#2b2b2b;font-weight:normal;">httpd/unix-directory</div>
<div class="t tb" style="left:1130.7px;top:245.70px;height:20px;line-height:20px;font-size:10.65px;color:#2b2b2b;font-weight:normal;">0700</div>
<div class="a" style="left:258px;top:267.3px;width:948px;height:23.3px;background:#fff;border-bottom:1px solid #eeeeee"></div>
<svg class="a" style="left:259px;top:273.8px" width="15" height="11" viewBox="0 0 15 11"><path d="M0 1.2Q0 0 1.2 0H5L6.3 1.6H13.8Q15 1.6 15 2.8V9.8Q15 11 13.8 11H1.2Q0 11 0 9.8Z" fill="#e6b563"/></svg>
<div class="t tb" style="left:285.8px;top:269.00px;height:20px;line-height:20px;font-size:10.65px;color:#2b2b2b;font-weight:normal;">.cphorde</div>
<div class="t tb" style="left:762px;top:269.00px;height:20px;line-height:20px;font-size:10.65px;color:#2b2b2b;font-weight:normal;">53 bytes</div>
<div class="t tb" style="left:839.2px;top:269.00px;height:20px;line-height:20px;font-size:10.65px;color:#2b2b2b;font-weight:normal;">Ayer 15:47</div>
<div class="t tb" style="left:992.8px;top:269.00px;height:20px;line-height:20px;font-size:10.65px;color:#2b2b2b;font-weight:normal;">httpd/unix-directory</div>
<div class="t tb" style="left:1130.7px;top:269.00px;height:20px;line-height:20px;font-size:10.65px;color:#2b2b2b;font-weight:normal;">0700</div>
<div class="a" style="left:258px;top:290.6px;width:948px;height:23.3px;background:#f7f7f7;border-bottom:1px solid #eeeeee"></div>
<svg class="a" style="left:259px;top:297.1px" width="15" height="11" viewBox="0 0 15 11"><path d="M0 1.2Q0 0 1.2 0H5L6.3 1.6H13.8Q15 1.6 15 2.8V9.8Q15 11 13.8 11H1.2Q0 11 0 9.8Z" fill="#e6b563"/></svg>
<div class="t tb" style="left:285.8px;top:292.30px;height:20px;line-height:20px;font-size:10.65px;color:#2b2b2b;font-weight:normal;">.htpasswds</div>
<div class="t tb" style="left:762px;top:292.30px;height:20px;line-height:20px;font-size:10.65px;color:#2b2b2b;font-weight:normal;">6 bytes</div>
<div class="t tb" style="left:839.2px;top:292.30px;height:20px;line-height:20px;font-size:10.65px;color:#2b2b2b;font-weight:normal;">17 ago. 2022 13:15</div>
<div class="t tb" style="left:992.8px;top:292.30px;height:20px;line-height:20px;font-size:10.65px;color:#2b2b2b;font-weight:normal;">httpd/unix-directory</div>
<div class="t tb" style="left:1130.7px;top:292.30px;height:20px;line-height:20px;font-size:10.65px;color:#2b2b2b;font-weight:normal;">0750</div>
<div class="a" style="left:258px;top:313.9px;width:948px;height:23.3px;background:#fff;border-bottom:1px solid #eeeeee"></div>
<svg class="a" style="left:259px;top:320.4px" width="15" height="11" viewBox="0 0 15 11"><path d="M0 1.2Q0 0 1.2 0H5L6.3 1.6H13.8Q15 1.6 15 2.8V9.8Q15 11 13.8 11H1.2Q0 11 0 9.8Z" fill="#e6b563"/></svg>
<div class="t tb" style="left:285.8px;top:315.60px;height:20px;line-height:20px;font-size:10.65px;color:#2b2b2b;font-weight:normal;">.pki</div>
<div class="t tb" style="left:762px;top:315.60px;height:20px;line-height:20px;font-size:10.65px;color:#2b2b2b;font-weight:normal;">19 bytes</div>
<div class="t tb" style="left:839.2px;top:315.60px;height:20px;line-height:20px;font-size:10.65px;color:#2b2b2b;font-weight:normal;">5 sept. 2022 12:20</div>
<div class="t tb" style="left:992.8px;top:315.60px;height:20px;line-height:20px;font-size:10.65px;color:#2b2b2b;font-weight:normal;">httpd/unix-directory</div>
<div class="t tb" style="left:1130.7px;top:315.60px;height:20px;line-height:20px;font-size:10.65px;color:#2b2b2b;font-weight:normal;">0740</div>
<div class="a" style="left:258px;top:337.2px;width:948px;height:23.3px;background:#f7f7f7;border-bottom:1px solid #eeeeee"></div>
<svg class="a" style="left:259px;top:343.7px" width="15" height="11" viewBox="0 0 15 11"><path d="M0 1.2Q0 0 1.2 0H5L6.3 1.6H13.8Q15 1.6 15 2.8V9.8Q15 11 13.8 11H1.2Q0 11 0 9.8Z" fill="#e6b563"/></svg>
<div class="t tb" style="left:285.8px;top:338.90px;height:20px;line-height:20px;font-size:10.65px;color:#2b2b2b;font-weight:normal;">.razor</div>
<div class="t tb" style="left:762px;top:338.90px;height:20px;line-height:20px;font-size:10.65px;color:#2b2b2b;font-weight:normal;">193 bytes</div>
<div class="t tb" style="left:839.2px;top:338.90px;height:20px;line-height:20px;font-size:10.65px;color:#2b2b2b;font-weight:normal;">Ayer 15:48</div>
<div class="t tb" style="left:992.8px;top:338.90px;height:20px;line-height:20px;font-size:10.65px;color:#2b2b2b;font-weight:normal;">httpd/unix-directory</div>
<div class="t tb" style="left:1130.7px;top:338.90px;height:20px;line-height:20px;font-size:10.65px;color:#2b2b2b;font-weight:normal;">0755</div>
<div class="a" style="left:258px;top:360.5px;width:948px;height:23.3px;background:#fff;border-bottom:1px solid #eeeeee"></div>
<svg class="a" style="left:259px;top:367.0px" width="15" height="11" viewBox="0 0 15 11"><path d="M0 1.2Q0 0 1.2 0H5L6.3 1.6H13.8Q15 1.6 15 2.8V9.8Q15 11 13.8 11H1.2Q0 11 0 9.8Z" fill="#e6b563"/></svg>
<div class="t tb" style="left:285.8px;top:362.20px;height:20px;line-height:20px;font-size:10.65px;color:#2b2b2b;font-weight:normal;">.spamassassin</div>
<div class="t tb" style="left:762px;top:362.20px;height:20px;line-height:20px;font-size:10.65px;color:#2b2b2b;font-weight:normal;">60 bytes</div>
<div class="t tb" style="left:839.2px;top:362.20px;height:20px;line-height:20px;font-size:10.65px;color:#2b2b2b;font-weight:normal;">Ayer 12:29</div>
<div class="t tb" style="left:992.8px;top:362.20px;height:20px;line-height:20px;font-size:10.65px;color:#2b2b2b;font-weight:normal;">httpd/unix-directory</div>
<div class="t tb" style="left:1130.7px;top:362.20px;height:20px;line-height:20px;font-size:10.65px;color:#2b2b2b;font-weight:normal;">0700</div>
<div class="a" style="left:258px;top:383.8px;width:948px;height:23.3px;background:#f7f7f7;border-bottom:1px solid #eeeeee"></div>
<svg class="a" style="left:259px;top:390.3px" width="15" height="11" viewBox="0 0 15 11"><path d="M0 1.2Q0 0 1.2 0H5L6.3 1.6H13.8Q15 1.6 15 2.8V9.8Q15 11 13.8 11H1.2Q0 11 0 9.8Z" fill="#e6b563"/></svg>
<div class="t tb" style="left:285.8px;top:385.50px;height:20px;line-height:20px;font-size:10.65px;color:#2b2b2b;font-weight:normal;">.subaccounts</div>
<div class="t tb" style="left:762px;top:385.50px;height:20px;line-height:20px;font-size:10.65px;color:#2b2b2b;font-weight:normal;">28 bytes</div>
<div class="t tb" style="left:839.2px;top:385.50px;height:20px;line-height:20px;font-size:10.65px;color:#2b2b2b;font-weight:normal;">25 ago. 2022 18:06</div>
<div class="t tb" style="left:992.8px;top:385.50px;height:20px;line-height:20px;font-size:10.65px;color:#2b2b2b;font-weight:normal;">httpd/unix-directory</div>
<div class="t tb" style="left:1130.7px;top:385.50px;height:20px;line-height:20px;font-size:10.65px;color:#2b2b2b;font-weight:normal;">0700</div>
<div class="a" style="left:258px;top:407.1px;width:948px;height:23.3px;background:#fff;border-bottom:1px solid #eeeeee"></div>
<svg class="a" style="left:259px;top:413.6px" width="15" height="11" viewBox="0 0 15 11"><path d="M0 1.2Q0 0 1.2 0H5L6.3 1.6H13.8Q15 1.6 15 2.8V9.8Q15 11 13.8 11H1.2Q0 11 0 9.8Z" fill="#e6b563"/></svg>
<div class="t tb" style="left:285.8px;top:408.80px;height:20px;line-height:20px;font-size:10.65px;color:#2b2b2b;font-weight:normal;">.trash</div>
<div class="t tb" style="left:762px;top:408.80px;height:20px;line-height:20px;font-size:10.65px;color:#2b2b2b;font-weight:normal;">6 bytes</div>
<div class="t tb" style="left:839.2px;top:408.80px;height:20px;line-height:20px;font-size:10.65px;color:#2b2b2b;font-weight:normal;">23 ago. 2022 17:30</div>
<div class="t tb" style="left:992.8px;top:408.80px;height:20px;line-height:20px;font-size:10.65px;color:#2b2b2b;font-weight:normal;">httpd/unix-directory</div>
<div class="t tb" style="left:1130.7px;top:408.80px;height:20px;line-height:20px;font-size:10.65px;color:#2b2b2b;font-weight:normal;">0700</div>
<div class="a" style="left:258px;top:430.4px;width:948px;height:23.3px;background:#f7f7f7;border-bottom:1px solid #eeeeee"></div>
<svg class="a" style="left:259px;top:436.9px" width="15" height="11" viewBox="0 0 15 11"><path d="M0 1.2Q0 0 1.2 0H5L6.3 1.6H13.8Q15 1.6 15 2.8V9.8Q15 11 13.8 11H1.2Q0 11 0 9.8Z" fill="#e6b563"/></svg>
<div class="t tb" style="left:285.8px;top:432.10px;height:20px;line-height:20px;font-size:10.65px;color:#2b2b2b;font-weight:normal;">dominio-adicional.com</div>
<div class="t tb" style="left:762px;top:432.10px;height:20px;line-height:20px;font-size:10.65px;color:#2b2b2b;font-weight:normal;">40 bytes</div>
<div class="t tb" style="left:839.2px;top:432.10px;height:20px;line-height:20px;font-size:10.65px;color:#2b2b2b;font-weight:normal;">5 sept. 2022 12:23</div>
<div class="t tb" style="left:992.8px;top:432.10px;height:20px;line-height:20px;font-size:10.65px;color:#2b2b2b;font-weight:normal;">httpd/unix-directory</div>
<div class="t tb" style="left:1130.7px;top:432.10px;height:20px;line-height:20px;font-size:10.65px;color:#2b2b2b;font-weight:normal;">0750</div>
<div class="a" style="left:258px;top:453.7px;width:948px;height:23.3px;background:#fff;border-bottom:1px solid #eeeeee"></div>
<svg class="a" style="left:259px;top:460.2px" width="15" height="11" viewBox="0 0 15 11"><path d="M0 1.2Q0 0 1.2 0H5L6.3 1.6H13.8Q15 1.6 15 2.8V9.8Q15 11 13.8 11H1.2Q0 11 0 9.8Z" fill="#e6b563"/></svg>
<div class="t tb" style="left:285.8px;top:455.40px;height:20px;line-height:20px;font-size:10.65px;color:#2b2b2b;font-weight:normal;">etc</div>
<div class="t tb" style="left:762px;top:455.40px;height:20px;line-height:20px;font-size:10.65px;color:#2b2b2b;font-weight:normal;">59 bytes</div>
<div class="t tb" style="left:839.2px;top:455.40px;height:20px;line-height:20px;font-size:10.65px;color:#2b2b2b;font-weight:normal;">5 sept. 2022 12:16</div>
<div class="t tb" style="left:992.8px;top:455.40px;height:20px;line-height:20px;font-size:10.65px;color:#2b2b2b;font-weight:normal;">httpd/unix-directory</div>
<div class="t tb" style="left:1130.7px;top:455.40px;height:20px;line-height:20px;font-size:10.65px;color:#2b2b2b;font-weight:normal;">0750</div>
<div class="a" style="left:258px;top:477.0px;width:948px;height:23.3px;background:#f7f7f7;border-bottom:1px solid #eeeeee"></div>
<svg class="a" style="left:259px;top:483.5px" width="15" height="11" viewBox="0 0 15 11"><path d="M0 1.2Q0 0 1.2 0H5L6.3 1.6H13.8Q15 1.6 15 2.8V9.8Q15 11 13.8 11H1.2Q0 11 0 9.8Z" fill="#e6b563"/></svg>
<div class="t tb" style="left:285.8px;top:478.70px;height:20px;line-height:20px;font-size:10.65px;color:#2b2b2b;font-weight:normal;">hola.mi-dominio.xyz</div>
<div class="t tb" style="left:762px;top:478.70px;height:20px;line-height:20px;font-size:10.65px;color:#2b2b2b;font-weight:normal;">40 bytes</div>
<div class="t tb" style="left:839.2px;top:478.70px;height:20px;line-height:20px;font-size:10.65px;color:#2b2b2b;font-weight:normal;">5 sept. 2022 15:51</div>
<div class="t tb" style="left:992.8px;top:478.70px;height:20px;line-height:20px;font-size:10.65px;color:#2b2b2b;font-weight:normal;">httpd/unix-directory</div>
<div class="t tb" style="left:1130.7px;top:478.70px;height:20px;line-height:20px;font-size:10.65px;color:#2b2b2b;font-weight:normal;">0750</div>
<div class="a" style="left:258px;top:500.3px;width:948px;height:23.3px;background:#fff;border-bottom:1px solid #eeeeee"></div>
<svg class="a" style="left:259px;top:506.8px" width="15" height="11" viewBox="0 0 15 11"><path d="M0 1.2Q0 0 1.2 0H5L6.3 1.6H13.8Q15 1.6 15 2.8V9.8Q15 11 13.8 11H1.2Q0 11 0 9.8Z" fill="#e6b563"/></svg>
<div class="t tb" style="left:285.8px;top:502.00px;height:20px;line-height:20px;font-size:10.65px;color:#2b2b2b;font-weight:normal;">logs</div>
<div class="t tb" style="left:762px;top:502.00px;height:20px;line-height:20px;font-size:10.65px;color:#2b2b2b;font-weight:normal;">4 KB</div>
<div class="t tb" style="left:839.2px;top:502.00px;height:20px;line-height:20px;font-size:10.65px;color:#2b2b2b;font-weight:normal;">Ayer 18:20</div>
<div class="t tb" style="left:992.8px;top:502.00px;height:20px;line-height:20px;font-size:10.65px;color:#2b2b2b;font-weight:normal;">httpd/unix-directory</div>
<div class="t tb" style="left:1130.7px;top:502.00px;height:20px;line-height:20px;font-size:10.65px;color:#2b2b2b;font-weight:normal;">0700</div>
<div class="a" style="left:258px;top:523.6px;width:948px;height:23.3px;background:#f7f7f7;border-bottom:1px solid #eeeeee"></div>
<svg class="a" style="left:258.7px;top:529.8px" width="15.40" height="11.30" viewBox="0 0 16 12" preserveAspectRatio="none"><path d="M1 0H15Q16 0 16 1V11Q16 12 15 12H1Q0 12 0 11V1Q0 0 1 0Z" fill="#3a64ab"/><path d="M0.8 1.2L8 6.8L15.2 1.2" fill="none" stroke="#f7f7f7" stroke-width="1.2"/></svg>
<div class="t tb" style="left:285.8px;top:525.30px;height:20px;line-height:20px;font-size:10.65px;color:#2b2b2b;font-weight:normal;">mail</div>
<div class="t tb" style="left:762px;top:525.30px;height:20px;line-height:20px;font-size:10.65px;color:#2b2b2b;font-weight:normal;">182 bytes</div>
<div class="t tb" style="left:839.2px;top:525.30px;height:20px;line-height:20px;font-size:10.65px;color:#2b2b2b;font-weight:normal;">Ayer 12:19</div>
<div class="t tb" style="left:992.8px;top:525.30px;height:20px;line-height:20px;font-size:10.65px;color:#2b2b2b;font-weight:normal;">mail</div>
<div class="t tb" style="left:1130.7px;top:525.30px;height:20px;line-height:20px;font-size:10.65px;color:#2b2b2b;font-weight:normal;">0751</div>
<div class="a" style="left:258px;top:546.9px;width:948px;height:23.3px;background:#fff;border-bottom:1px solid #eeeeee"></div>
<svg class="a" style="left:258.7px;top:552.9px" width="15.40" height="11.50" viewBox="0 0 16 12" preserveAspectRatio="none"><path d="M1 3.3H12M1 8.7H15" stroke="#4b9a7a" stroke-width="1.6"/><path d="M11 0.2L15 3.3L11 6.4Z M5 5.6L1 8.7L5 11.8Z" fill="#4b9a7a"/></svg>
<div class="t tb" style="left:285.8px;top:548.60px;height:20px;line-height:20px;font-size:10.65px;color:#2b2b2b;font-weight:normal;">public_ftp</div>
<div class="t tb" style="left:762px;top:548.60px;height:20px;line-height:20px;font-size:10.65px;color:#2b2b2b;font-weight:normal;">22 bytes</div>
<div class="t tb" style="left:839.2px;top:548.60px;height:20px;line-height:20px;font-size:10.65px;color:#2b2b2b;font-weight:normal;">17 ago. 2022 13:15</div>
<div class="t tb" style="left:992.8px;top:548.60px;height:20px;line-height:20px;font-size:10.65px;color:#2b2b2b;font-weight:normal;">publicftp</div>
<div class="t tb" style="left:1130.7px;top:548.60px;height:20px;line-height:20px;font-size:10.65px;color:#2b2b2b;font-weight:normal;">0750</div>
<div class="a" style="left:258px;top:570.2px;width:948px;height:23.3px;background:#e9e9e9;border-bottom:1px solid #eeeeee"></div>
<svg class="a" style="left:259px;top:575.7px" width="15.00" height="12.00" viewBox="0 0 12 12" preserveAspectRatio="none"><circle cx="6" cy="6" r="5.5" fill="#3a64ab"/></svg>
<div class="t tb" style="left:285.8px;top:571.90px;height:20px;line-height:20px;font-size:10.65px;color:#2b2b2b;font-weight:normal;">public_html</div>
<div class="t tb" style="left:762px;top:571.90px;height:20px;line-height:20px;font-size:10.65px;color:#2b2b2b;font-weight:normal;">4 KB</div>
<div class="t tb" style="left:839.2px;top:571.90px;height:20px;line-height:20px;font-size:10.65px;color:#2b2b2b;font-weight:normal;">5 sept. 2022 15:51</div>
<div class="t tb" style="left:992.8px;top:571.90px;height:20px;line-height:20px;font-size:10.65px;color:#2b2b2b;font-weight:normal;">publichtml</div>
<div class="t tb" style="left:1130.7px;top:571.90px;height:20px;line-height:20px;font-size:10.65px;color:#2b2b2b;font-weight:normal;">0750</div>
<div class="a" style="left:256px;top:571px;width:950px;height:1px;background:#f3eeee"></div>
<div class="a" style="left:256px;top:578px;width:950px;height:4px;background:#fff"></div>
<div class="a" style="left:100px;top:553px;width:156px;height:25px;background:linear-gradient(to bottom,rgba(255,255,255,1),rgba(255,255,255,0) 80%),linear-gradient(to right,#fff,#ebebeb);"></div>
<div class="a" style="left:0px;top:578px;width:256px;height:4px;background:#fff"></div>
<div class="a" style="left:6px;top:4px;width:1204px;height:63px;border:2px solid #b3423a;box-shadow:0 0 0 1px rgba(236,160,150,0.25),inset 0 0 0 1px rgba(236,160,150,0.25)"></div>
<div class="a" style="left:7px;top:70px;width:236px;height:28px;border:2px solid #b3423a;box-shadow:0 0 0 1px rgba(236,160,150,0.25),inset 0 0 0 1px rgba(236,160,150,0.25)"></div>
<div class="a" style="left:7px;top:129px;width:245px;height:423px;border:2px solid #b3423a;box-shadow:0 0 0 1px rgba(236,160,150,0.25),inset 0 0 0 1px rgba(236,160,150,0.25)"></div>
<div class="a" style="left:256px;top:101px;width:944px;height:470px;border:2px solid #b3423a;box-shadow:0 0 0 1px rgba(236,160,150,0.25),inset 0 0 0 1px rgba(236,160,150,0.25)"></div>
<svg class="a" style="left:1180px;top:43px" width="14" height="20" viewBox="1180 43 14 20"><path d="M1189.2 46V61M1189.6 45.6L1184 50.2" fill="none" stroke="#b3423a" stroke-width="2.1"/></svg>
<div class="t" style="left:43.2px;top:73.6px;font-size:23px;line-height:23px;color:#b3423a;font-weight:normal;-webkit-text-stroke:0.1px #b3423a">2</div>
<div class="t" style="left:235.3px;top:527.5px;font-size:23px;line-height:23px;color:#b3423a;font-weight:normal;-webkit-text-stroke:0.3px #b3423a">3</div>
<div class="t" style="left:263px;top:106.6px;font-size:23px;line-height:23px;color:#b3423a;font-weight:normal;-webkit-text-stroke:0.3px #b3423a;transform:scaleX(1.08);transform-origin:0 0">4</div>
</body></html>
